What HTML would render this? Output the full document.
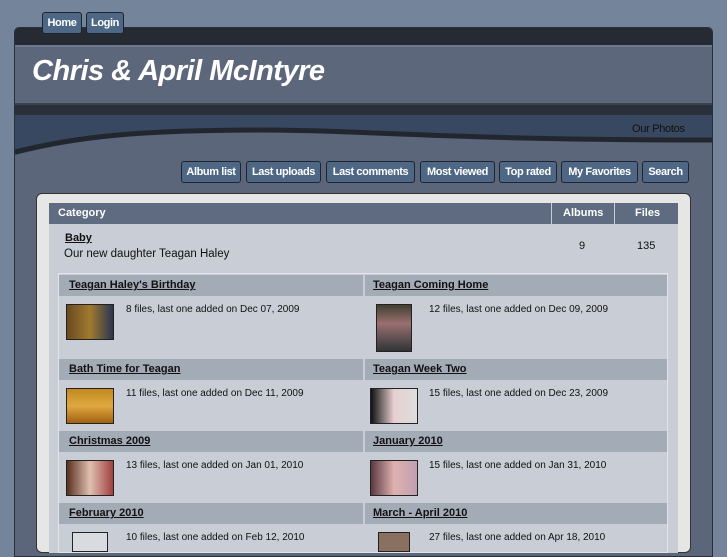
<!DOCTYPE html>
<html><head><style>
*{margin:0;padding:0;box-sizing:border-box}
body{width:727px;height:545px;overflow:hidden;background:#74859b;font-family:"Liberation Sans",sans-serif;position:relative}
.a{position:absolute}
.btn{position:absolute;height:22px;background:#4e6784;border:1px solid #1e2530;border-radius:3px;color:#fff;font-weight:bold;font-size:11px;line-height:20px;text-align:center;letter-spacing:-0.4px}
.frame{left:14px;top:27px;width:699px;height:530px;background:#5b667a;border-radius:5px 5px 0 0;border:1px solid #2a303a}
.t{font-size:11px;color:#111}
.u{font-weight:bold;text-decoration:underline;font-size:11px;color:#111}
.th{position:absolute;border:1px solid #222}
</style></head><body>
<div class="a frame"></div>
<div class="a" style="left:15px;top:28px;width:697px;height:17px;background:#262b33;border-radius:4px 4px 0 0"></div>
<div class="a" style="left:15px;top:45px;width:697px;height:58px;background:#5d677b;border-top:2px solid #6e788c"></div>
<div class="a" style="left:32px;top:55px;color:#fff;font-size:29px;font-weight:bold;font-style:italic;letter-spacing:-0.5px">Chris &amp; April McIntyre</div>
<div class="a" style="left:15px;top:103px;width:697px;height:12px;background:#2a303a;border-top:2px solid #3c4350"></div>
<div class="a" style="left:15px;top:115px;width:697px;height:40px;background:#384860"></div>
<svg class="a" style="left:15px;top:115px" width="697" height="50">
<path d="M0 40 C60 25 120 17 250 17 C350 17 430 27 697 27 L697 50 L0 50Z" fill="#5b667a"/>
<path d="M0 37 C60 22 120 15 250 15 C350 15 430 25 697 25" fill="none" stroke="#22272f" stroke-width="5"/>
</svg>
<div class="a" style="left:632px;top:123px;font-size:11px;color:#111;letter-spacing:-0.3px">Our Photos</div>
<div class="btn" style="left:42px;top:12px;width:40px">Home</div>
<div class="btn" style="left:86px;top:12px;width:38px">Login</div>
<div class="btn" style="left:181px;top:161px;width:60px">Album list</div>
<div class="btn" style="left:246px;top:161px;width:75px">Last uploads</div>
<div class="btn" style="left:326px;top:161px;width:89px">Last comments</div>
<div class="btn" style="left:420px;top:161px;width:75px">Most viewed</div>
<div class="btn" style="left:499px;top:161px;width:58px">Top rated</div>
<div class="btn" style="left:561px;top:161px;width:77px">My Favorites</div>
<div class="btn" style="left:642px;top:161px;width:47px">Search</div>
<div class="a" style="left:36px;top:193px;width:655px;height:360px;background:#e6e6e4;border:1px solid #333;border-radius:6px"></div>
<div class="a" style="left:49px;top:203px;width:629px;height:350px;background:#c8cdd6"></div>
<div class="a" style="left:49px;top:203px;width:629px;height:21px;background:#5e6b80"></div>
<div class="a" style="left:551px;top:203px;width:1px;height:21px;background:#c8cdd6"></div>
<div class="a" style="left:614px;top:203px;width:1px;height:21px;background:#c8cdd6"></div>
<div class="a" style="left:58px;top:207px;color:#fff;font-weight:bold;font-size:11px">Category</div>
<div class="a" style="left:563px;top:207px;color:#fff;font-weight:bold;font-size:11px">Albums</div>
<div class="a" style="left:635px;top:207px;color:#fff;font-weight:bold;font-size:11px">Files</div>
<div class="a u" style="left:65px;top:232px">Baby</div>
<div class="a" style="left:64px;top:248px;font-size:11.5px;color:#111">Our new daughter Teagan Haley</div>
<div class="a t" style="left:579px;top:240px">9</div>
<div class="a t" style="left:637px;top:240px">135</div>
<div class="a" style="left:58px;top:273px;width:610px;height:280px;background:#c8cdd6;border:1px solid #e2e4e8"></div>
<div class="a" style="left:59px;top:275px;width:608px;height:21px;background:#a3abb7"></div>
<div class="a" style="left:59px;top:359px;width:608px;height:21px;background:#a3abb7"></div>
<div class="a" style="left:59px;top:431px;width:608px;height:21px;background:#a3abb7"></div>
<div class="a" style="left:59px;top:503px;width:608px;height:21px;background:#a3abb7"></div>
<div class="a" style="left:363px;top:275px;width:2px;height:270px;background:#c8cdd6"></div>
<div class="a u" style="left:69px;top:279px">Teagan Haley's Birthday</div>
<div class="a u" style="left:373px;top:279px">Teagan Coming Home</div>
<div class="a u" style="left:69px;top:363px">Bath Time for Teagan</div>
<div class="a u" style="left:373px;top:363px">Teagan Week Two</div>
<div class="a u" style="left:69px;top:435px">Christmas 2009</div>
<div class="a u" style="left:373px;top:435px">January 2010</div>
<div class="a u" style="left:69px;top:507px">February 2010</div>
<div class="a u" style="left:373px;top:507px">March - April 2010</div>
<div class="th" style="left:66px;top:304px;width:48px;height:36px;background:linear-gradient(90deg,#6a4a1e,#a07a30 50%,#2a3550)"></div>
<div class="th" style="left:376px;top:304px;width:36px;height:48px;background:linear-gradient(#404030,#9a7070 40%,#303438)"></div>
<div class="th" style="left:66px;top:388px;width:48px;height:36px;background:linear-gradient(#c08a20,#e0a840 50%,#a06010)"></div>
<div class="th" style="left:370px;top:388px;width:48px;height:36px;background:linear-gradient(90deg,#111,#e8d0d0 50%,#ddd)"></div>
<div class="th" style="left:66px;top:460px;width:48px;height:36px;background:linear-gradient(90deg,#5a3020,#e0c0b0 50%,#a04040)"></div>
<div class="th" style="left:370px;top:460px;width:48px;height:36px;background:linear-gradient(90deg,#5a3a40,#e0b0b0 50%,#c0a0b0)"></div>
<div class="th" style="left:72px;top:532px;width:36px;height:20px;background:#d8dce0"></div>
<div class="th" style="left:378px;top:532px;width:32px;height:20px;background:#8a7060"></div>
<div class="a t" style="left:126px;top:304px;font-size:10px">8 files, last one added on Dec 07, 2009</div>
<div class="a t" style="left:429px;top:304px;font-size:10px">12 files, last one added on Dec 09, 2009</div>
<div class="a t" style="left:126px;top:388px;font-size:10px">11 files, last one added on Dec 11, 2009</div>
<div class="a t" style="left:429px;top:388px;font-size:10px">15 files, last one added on Dec 23, 2009</div>
<div class="a t" style="left:126px;top:460px;font-size:10px">13 files, last one added on Jan 01, 2010</div>
<div class="a t" style="left:429px;top:460px;font-size:10px">15 files, last one added on Jan 31, 2010</div>
<div class="a t" style="left:126px;top:532px;font-size:10px">10 files, last one added on Feb 12, 2010</div>
<div class="a t" style="left:429px;top:532px;font-size:10px">27 files, last one added on Apr 18, 2010</div>
</body></html>
